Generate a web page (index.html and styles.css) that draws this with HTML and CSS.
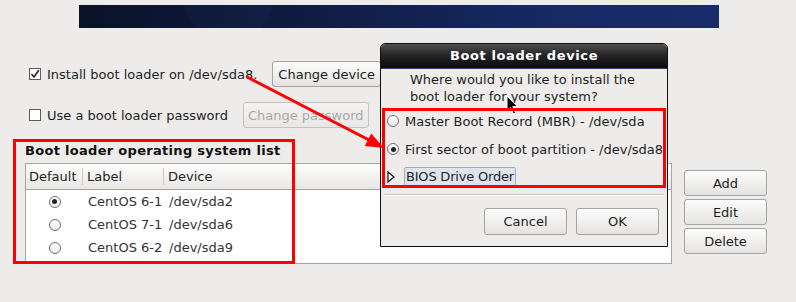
FILE: index.html
```html
<!DOCTYPE html>
<html lang="en">
<head>
  <meta charset="UTF-8">
  <title>Boot Loader</title>
  <link rel="stylesheet" href="styles.css">
</head>
<body>
  <div class="banner"></div>

  <div class="options">
    <div class="opt-row">
      <span class="check"><svg width="10" height="10" viewBox="0 0 10 10"><path d="M1.5 5 L4 8 L8.8 1.2" fill="none" stroke="#222" stroke-width="1.6"/></svg></span>
      <span class="opt-label">Install boot loader on /dev/sda8.</span>
      <button class="btn">Change device</button>
    </div>
    <div class="opt-row">
      <span class="check"></span>
      <span class="opt-label">Use a boot loader password</span>
      <button class="btn" disabled>Change password</button>
    </div>
  </div>

  <div class="os-list">
    <h2>Boot loader operating system list</h2>
    <div class="list-body">
      <div class="os-table">
        <div class="thead">
          <div class="th">Default</div>
          <div class="th">Label</div>
          <div class="th last">Device</div>
        </div>
        <div class="trow">
          <div class="td center"><span class="radio on"></span></div>
          <div class="td">CentOS 6-1</div>
          <div class="td">/dev/sda2</div>
        </div>
        <div class="trow">
          <div class="td center"><span class="radio"></span></div>
          <div class="td">CentOS 7-1</div>
          <div class="td">/dev/sda6</div>
        </div>
        <div class="trow">
          <div class="td center"><span class="radio"></span></div>
          <div class="td">CentOS 6-2</div>
          <div class="td">/dev/sda9</div>
        </div>
      </div>
      <div class="side-buttons">
        <button class="btn">Add</button>
        <button class="btn">Edit</button>
        <button class="btn">Delete</button>
      </div>
    </div>
  </div>

  <div class="dialog">
    <div class="dlg-title">Boot loader device</div>
    <p class="dlg-text">Where would you like to install the<br>boot loader for your system?</p>
    <div class="dlg-opts">
      <div class="dlg-opt"><span class="radio"></span>Master Boot Record (MBR) - /dev/sda</div>
      <div class="dlg-opt"><span class="radio on"></span>First sector of boot partition - /dev/sda8</div>
      <div class="dlg-opt">
        <svg class="expander" width="8" height="12" viewBox="0 0 8 12"><path d="M1 1 L7 6 L1 11 Z" fill="#fff" stroke="#111" stroke-width="1.2"/></svg>
        <span class="bios">BIOS Drive Order</span>
      </div>
    </div>
    <div class="dlg-sep"></div>
    <div class="dlg-buttons">
      <button class="btn dlg-btn">Cancel</button>
      <button class="btn dlg-btn">OK</button>
    </div>
  </div>

  <svg class="cursor" width="14" height="21" viewBox="0 0 14 21"><path d="M1 1 L1 16 L4.5 12.5 L7.5 19 L9.5 18 L6.8 11.6 L11.5 11.6 Z" fill="#000" stroke="#fff" stroke-width="1"/></svg>

  <div class="mark mark-os"></div>
  <div class="mark mark-dev"></div>
  <svg class="arrow" width="796" height="302" viewBox="0 0 796 302">
    <line x1="247" y1="77" x2="369" y2="140" stroke="#f00" stroke-width="3"/>
    <polygon points="384,148 364.8,145.9 371.2,133.5" fill="#f00"/>
  </svg>
</body>
</html>
```

FILE: styles.css
```css
body {
  margin: 0;
  width: 796px;
  height: 302px;
  overflow: hidden;
  position: relative;
  background-color: #edeceb;
  font-family: "DejaVu Sans", sans-serif;
  font-size: 13px;
  color: #1e1e1e;
}

.banner {
  margin: 5px 0 0 79px;
  width: 640px;
  height: 23px;
  background: radial-gradient(circle at 150px -10px, rgba(40, 60, 110, 0.1) 0, rgba(40, 60, 110, 0.1) 45px, transparent 46px),
    linear-gradient(90deg, #0a1229 0%, #111d45 40%, #162a66 75%, #182c6b 100%);
}

.options {
  margin-top: 33px;
  padding-left: 29px;
  display: flex;
  flex-direction: column;
  gap: 15px;
}

.opt-row {
  display: flex;
  align-items: center;
  height: 26px;
}

.check {
  width: 12px;
  height: 12px;
  box-sizing: border-box;
  border: 1px solid #5e5e5e;
  background-color: #fff;
  margin-right: 6px;
  display: flex;
  align-items: center;
  justify-content: center;
}

.opt-label {
  margin-right: 15px;
}

.btn {
  font: inherit;
  height: 26px;
  padding: 0 5px;
  border: 1px solid #a5a4a2;
  border-radius: 3px;
  background: linear-gradient(#fcfcfc, #e4e3e1);
  color: #1e1e1e;
}

.btn:disabled {
  color: #a9a8a6;
  border-color: #c4c3c1;
  background: linear-gradient(#f3f2f1, #e9e8e6);
  padding: 0 4px;
}

.os-list {
  margin-top: 15px;
  padding-left: 25px;
}

.os-list h2 {
  font-size: 13px;
  line-height: 16px;
  letter-spacing: 0.3px;
  margin: 0 0 4px;
  color: #111;
}

.list-body {
  display: flex;
  align-items: flex-start;
}

.os-table {
  width: 647px;
  height: 101px;
  box-sizing: border-box;
  border: 1px solid #a6a5a3;
  background-color: #fff;
}

.thead,
.trow {
  display: grid;
  grid-template-columns: 57px 81px 1fr;
}

.thead {
  height: 25px;
  background: linear-gradient(#fdfdfd, #e8e7e5);
  border-bottom: 1px solid #a6a5a3;
}

.th {
  display: flex;
  align-items: center;
  padding-left: 4px;
  background: linear-gradient(#cbcac8, #cbcac8) right 4px / 1px 17px no-repeat;
}

.th:first-child {
  padding-left: 3px;
}

.th.last {
  background: none;
}

.trow {
  height: 23px;
  color: #333;
}

.td {
  display: flex;
  align-items: center;
  padding-left: 5px;
}

.td.center {
  padding-left: 0;
  justify-content: center;
}

.radio {
  width: 12px;
  height: 12px;
  box-sizing: border-box;
  border-radius: 50%;
  border: 1px solid #707070;
  background: linear-gradient(#fff, #ebebeb);
  display: inline-flex;
  align-items: center;
  justify-content: center;
}

.radio.on::after {
  content: "";
  width: 5px;
  height: 5px;
  border-radius: 50%;
  background-color: #222;
}

.side-buttons {
  margin-left: 12px;
  padding-top: 7px;
  width: 83px;
  display: flex;
  flex-direction: column;
  gap: 3px;
}

/* dialog over the page */
.dialog {
  position: absolute;
  left: 380px;
  top: 43px;
  width: 288px;
  height: 204px;
  box-sizing: border-box;
  border: 1px solid #111;
  border-radius: 5px 5px 0 0;
  background-color: #edeceb;
}

.dlg-title {
  height: 24px;
  line-height: 24px;
  border-radius: 4px 4px 0 0;
  border-bottom: 1px solid #34466b;
  background: linear-gradient(#505050, #262626 45%, #0c0c0c);
  color: #fff;
  font-weight: bold;
  letter-spacing: 0.6px;
  text-align: center;
}

.dlg-text {
  margin: 2px 0 0;
  padding-left: 29px;
  line-height: 17px;
}

.dlg-opts {
  margin-top: 2px;
}

.dlg-opt {
  display: flex;
  align-items: center;
  gap: 6px;
  height: 28px;
  padding-left: 6px;
}

.expander {
  margin-right: 3px;
}

.bios {
  height: 20px;
  line-height: 18px;
  box-sizing: border-box;
  padding: 0 1px;
  border: 1px solid #a2adbb;
  border-radius: 2px;
  background-color: #dfe5ee;
  letter-spacing: -0.2px;
}

.dlg-sep {
  margin: 3px 3px 0;
  height: 1px;
  background-color: #c6c5c3;
  border-bottom: 1px solid #fafafa;
}

.dlg-buttons {
  margin-top: 12px;
  padding-right: 8px;
  display: flex;
  justify-content: flex-end;
  gap: 9px;
}

.dlg-btn {
  width: 83px;
  height: 27px;
}

/* annotations */
.cursor {
  position: absolute;
  left: 506px;
  top: 95px;
}

.mark {
  position: absolute;
  box-sizing: border-box;
  border: 3px solid #f00;
}

.mark-os {
  left: 13px;
  top: 139px;
  width: 282px;
  height: 125px;
}

.mark-dev {
  left: 382px;
  top: 108px;
  width: 284px;
  height: 80px;
}

.arrow {
  position: absolute;
  left: 0;
  top: 0;
  pointer-events: none;
}
```
